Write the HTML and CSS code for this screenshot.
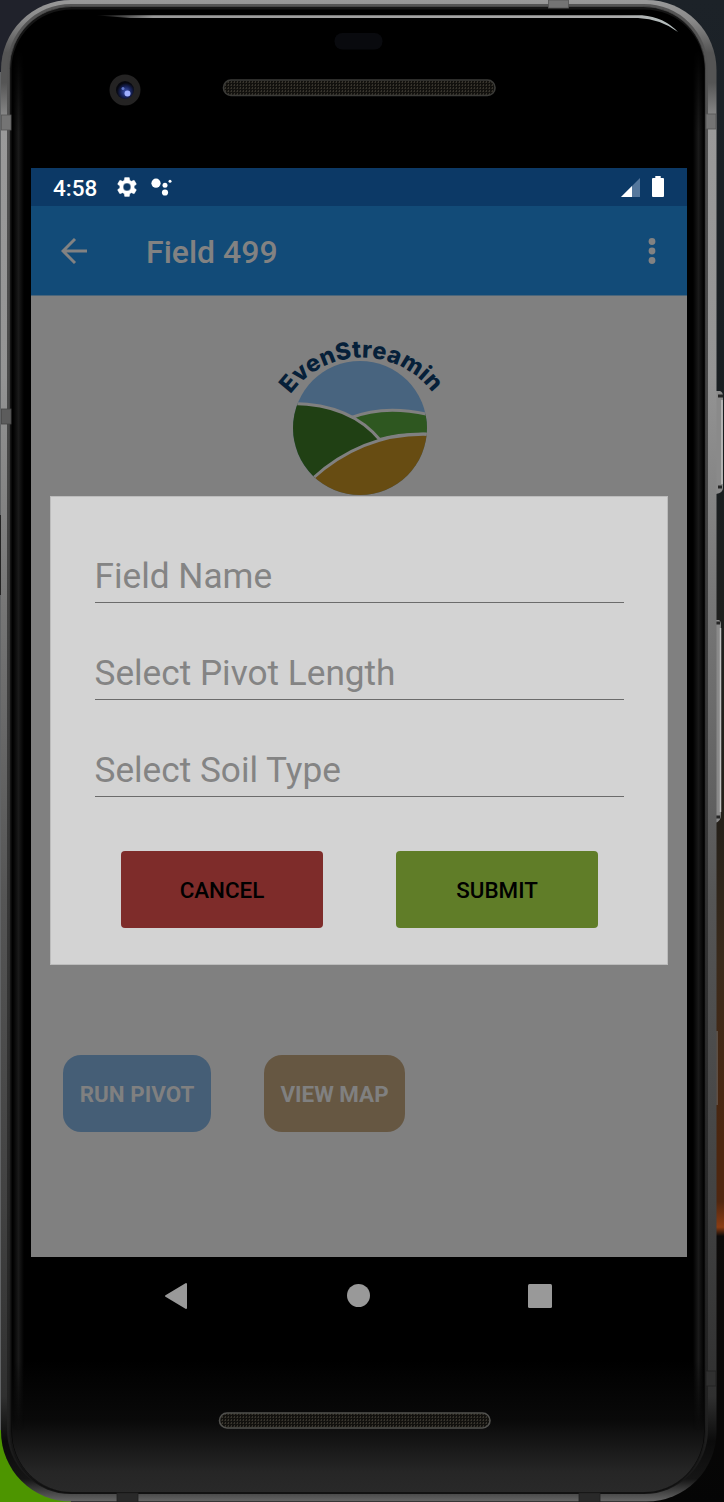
FILE: index.html
```html
<!DOCTYPE html>
<html lang="en">
<head>
<meta charset="utf-8">
<title>Field 499</title>
<link rel="stylesheet" href="styles.css">
</head>
<body>
<div class="stage">
  <svg class="device" viewBox="0 0 724 1502" width="724" height="1502" aria-hidden="true">
    <defs>
      <linearGradient id="desk" x1="0" y1="0" x2="0" y2="1">
        <stop offset="0" stop-color="#1c2228"/><stop offset=".3" stop-color="#181d20"/><stop offset=".55" stop-color="#252019"/>
        <stop offset=".64" stop-color="#3a2a1b"/><stop offset=".76" stop-color="#4c260f"/><stop offset=".8" stop-color="#50260f"/>
        <stop offset=".817" stop-color="#8a3c13"/><stop offset=".823" stop-color="#0c0a09"/><stop offset="1" stop-color="#050505"/>
      </linearGradient>
      <linearGradient id="metal" x1="0" y1="0" x2="0" y2="1">
        <stop offset="0" stop-color="#999"/><stop offset=".013" stop-color="#8a8a8a"/><stop offset=".035" stop-color="#555"/><stop offset=".055" stop-color="#555"/><stop offset=".085" stop-color="#9a9a9a"/>
        <stop offset=".25" stop-color="#949494"/><stop offset=".4" stop-color="#777"/><stop offset=".6" stop-color="#555"/>
        <stop offset=".8" stop-color="#424242"/><stop offset=".93" stop-color="#303030"/><stop offset=".96" stop-color="#0b0b0b"/><stop offset=".985" stop-color="#151515"/><stop offset="1" stop-color="#666"/>
      </linearGradient>
      <linearGradient id="rim" x1="0" y1="0" x2="0" y2="1">
        <stop offset="0" stop-color="#555"/><stop offset=".5" stop-color="#3c3c3c"/><stop offset=".94" stop-color="#222"/><stop offset="1" stop-color="#161616"/>
      </linearGradient>
      <linearGradient id="edge" x1="0" y1="0" x2="0" y2="1">
        <stop offset="0" stop-color="#555"/><stop offset=".6" stop-color="#3c3c3c"/><stop offset=".95" stop-color="#202020"/><stop offset="1" stop-color="#0a0a0a"/>
      </linearGradient>
      <linearGradient id="chin" x1="0" y1="0" x2="0" y2="1">
        <stop offset="0" stop-color="#000"/><stop offset=".45" stop-color="#090909"/><stop offset=".85" stop-color="#262626"/><stop offset="1" stop-color="#292929"/>
      </linearGradient>
      <linearGradient id="shine" x1="0" y1="0" x2="1" y2="0">
        <stop offset="0" stop-color="#999" stop-opacity="0"/><stop offset=".1" stop-color="#999"/><stop offset=".9" stop-color="#aaa"/><stop offset="1" stop-color="#b8c2c2"/>
      </linearGradient>
      <linearGradient id="band" x1="0" y1="0" x2="1" y2="0">
        <stop offset="0" stop-color="#1a1a1a" stop-opacity="0"/><stop offset=".5" stop-color="#1a1a1a"/><stop offset="1" stop-color="#1a1a1a" stop-opacity="0"/>
      </linearGradient>
      <linearGradient id="fade" x1="0" y1="0" x2="0" y2="1">
        <stop offset="0" stop-color="#000"/><stop offset=".06" stop-color="#fff"/><stop offset=".95" stop-color="#fff"/><stop offset="1" stop-color="#000"/>
      </linearGradient>
      <mask id="ends" maskUnits="userSpaceOnUse" x="0" y="50" width="724" height="1380"><rect y="50" width="724" height="1380" fill="url(#fade)"/></mask>
      <radialGradient id="lens" cx=".55" cy=".6" r=".5">
        <stop offset="0" stop-color="#4058b5"/><stop offset=".6" stop-color="#172259"/><stop offset="1" stop-color="#07080f"/>
      </radialGradient>
      <pattern id="mesh" width="3" height="3" patternUnits="userSpaceOnUse">
        <rect width="3" height="3" fill="#12110e"/><rect width="1" height="2" fill="#37342d"/><rect x="2" y="1" width="1" height="1" fill="#29261f"/>
      </pattern>
    </defs>
    <rect width="724" height="1502" fill="url(#desk)"/>
    <rect width="100" height="72" fill="#20222b"/>
    <rect y="72" width="4" height="1358" fill="#626466"/>
    <rect y="515" width="4" height="80" fill="#252525"/>
    <rect y="1430" width="71" height="72" fill="#4d9500"/>
    <g fill="#8a8a8a">
      <path d="M716 391h4q3 1 3 5v92q0 5-7 6z"/><path d="M715 620h4q2 1 2 5v189q0 8-6 9z"/>
    </g>
    <path d="M722 400v84M720.500 628v184" stroke="#c0c0c0" stroke-width="1.500"/>
    <path d="M718 396h5M718 487h4M716 623h4M716 817h4" stroke="#252525" stroke-width="3"/>
    <path d="M717 1031v74" stroke="#777"/>
    <rect x="1" y="0" width="715.500" height="1501.500" rx="70" ry="70" fill="url(#metal)"/>
    <rect x="7" y="4" width="701" height="1490" rx="64" fill="url(#rim)"/>
    <rect x="9.500" y="6.500" width="696" height="1486.500" rx="62" fill="#151515" stroke="url(#edge)" stroke-width=".6"/>
    <rect x="11.500" y="9.500" width="693" height="1482" rx="60" fill="#000"/>
    <path d="M12 1360H704V1432A60 60 0 0 1 644 1492H72A60 60 0 0 1 12 1432Z" fill="url(#chin)"/>
    <g mask="url(#ends)">
      <rect x="13" y="50" width="11" height="1380" fill="url(#band)"/>
      <rect x="693" y="50" width="11" height="1380" fill="url(#band)"/>
    </g>
    <path d="M95 15.200H642Q664 17 678 32Q661 19 638 18H130Z" fill="url(#shine)"/>
    <g fill="#747474" stroke="#555" stroke-width=".8">
      <rect x="1.500" y="115" width="9.500" height="15"/><rect x="706" y="114" width="10" height="15"/><rect x="1.500" y="409" width="9.500" height="15" fill="#5c5c5c" stroke="#444"/>
      <rect x="548.500" y="0" width="20" height="8"/><rect x="706" y="1371" width="10" height="15" fill="#303030" stroke="#222"/>
      <rect x="117" y="1493" width="21" height="9" fill="#292929" stroke="#222"/><rect x="579" y="1493" width="21" height="9" fill="#292929" stroke="#222"/>
    </g>
    <rect x="334.500" y="33" width="48" height="16.500" rx="8" fill="#090a0e"/>
    <circle cx="125" cy="90" r="15.500" fill="#242323"/><circle cx="125" cy="90" r="9" fill="url(#lens)"/>
    <circle cx="127.500" cy="93.500" r="3" fill="#9fafff"/><circle cx="123" cy="88.500" r="1.500" fill="#6378c8"/>
    <rect x="223.500" y="80" width="271.500" height="15.500" rx="7.500" fill="url(#mesh)" stroke="#3b3b38" stroke-width="1.600"/>
    <rect x="219.500" y="1413" width="270.500" height="15" rx="7.500" fill="url(#mesh)" stroke="#51514e" stroke-width="1.600"/>
  </svg>

  <div class="screen">
    <div class="status">
      <span class="clock">4:58</span>
      <svg class="gear" viewBox="2 2 20 20" width="20" height="20"><path fill="#fff" stroke="#fff" stroke-width=".4" d="M19.140 12.940c.04-.3.060-.610.060-.940 0-.320-.020-.640-.070-.940l2.030-1.580a.49.49 0 0 0 .120-.610l-1.920-3.320a.49.49 0 0 0-.590-.220l-2.390.960c-.5-.380-1.030-.7-1.620-.940l-.360-2.540a.48.48 0 0 0-.480-.410h-3.840c-.24 0-.43.170-.47.410l-.36 2.540c-.59.240-1.130.57-1.620.94l-2.390-.96a.49.49 0 0 0-.59.220L2.740 8.870c-.12.210-.08.470.12.610l2.030 1.580c-.05.3-.09.630-.09.940s.02.640.07.940l-2.030 1.580a.49.49 0 0 0-.12.610l1.920 3.320c.12.220.37.290.59.220l2.390-.96c.5.380 1.030.7 1.620.94l.36 2.540c.05.240.24.410.48.410h3.840c.24 0 .44-.17.47-.41l.36-2.540c.59-.24 1.130-.56 1.620-.94l2.390.96c.22.080.47 0 .59-.22l1.920-3.320a.49.49 0 0 0-.12-.61zM12 15.900A3.900 3.900 0 1 1 12 8.100a3.900 3.900 0 0 1 0 7.800z"/></svg>
      <svg class="assistant" width="22" height="18" viewBox="0 0 22 18" fill="#fff"><circle cx="5" cy="5.200" r="4.600"/><circle cx="14" cy="7.200" r="2.500"/><circle cx="19" cy="3.200" r="1.500"/><circle cx="14" cy="14.500" r="3.100"/></svg>
      <svg class="signal" width="19" height="19" viewBox="0 0 19 19"><path d="M19 0v19H0z" fill="#55779c"/><path d="M11 8v11H0z" fill="#fff"/></svg>
      <svg class="battery" width="12" height="21" viewBox="0 0 12 21"><path d="M3.300 0h5.400v2H11q1 0 1 1v17q0 1-1 1H1q-1 0-1-1V3q0-1 1-1h2.300z" fill="#fff"/></svg>
    </div>
    <div class="appbar">
      <svg width="26" height="26" viewBox="0 0 26 26" fill="none" stroke="#828282" stroke-width="2.900"><path d="M26 13H2.500M14 1 2 13l12 12"/></svg>
      <h1 class="title">Field 499</h1>
      <svg width="8" height="28" viewBox="0 0 8 28" fill="#828282"><circle cx="4" cy="4.500" r="3.400"/><circle cx="4" cy="14" r="3.400"/><circle cx="4" cy="23.500" r="3.400"/></svg>
    </div>
    <div class="content">
      <svg class="logo" viewBox="260 325 200 180" width="200" height="180">
        <defs><clipPath id="disc"><circle cx="360" cy="428" r="67"/></clipPath>
        <path id="arc" d="M290.500 394.500A88 88 0 0 1 434.500 395.500"/></defs>
        <g clip-path="url(#disc)">
          <rect x="290" y="360" width="140" height="136" fill="#48647f"/>
          <path d="M350 418Q385 404 430 415V434Q400 433 378 440Z" fill="#2e5720" stroke="#808080" stroke-width="3"/>
          <path d="M290 403.500Q350 403 381 441Q350 452 314 478L290 500Z" fill="#204014" stroke="#808080" stroke-width="3"/>
          <path d="M312 479Q364 432 430 434.500V500H312Z" fill="#674c12" stroke="#808080" stroke-width="3"/>
        </g>
        <text class="brand"><textPath href="#arc" textLength="165" lengthAdjust="spacing">EvenStreamin</textPath></text>
      </svg>
      <div class="dialog">
        <div class="field">Field Name</div>
        <div class="field">Select Pivot Length</div>
        <div class="field">Select Soil Type</div>
        <div class="actions"><div class="btn cancel">CANCEL</div><div class="btn submit">SUBMIT</div></div>
      </div>
      <div class="links"><div class="pill run">RUN PIVOT</div><div class="pill map">VIEW MAP</div></div>
    </div>
    <div class="nav">
      <svg width="24" height="28" viewBox="0 0 24 28"><path d="M22 2v24L2 14z" fill="#999" stroke="#999" stroke-width="2" stroke-linejoin="round"/></svg>
      <svg width="24" height="24" viewBox="0 0 24 24"><circle cx="12.500" cy="11.500" r="11.500" fill="#999"/></svg>
      <svg width="24" height="24" viewBox="0 0 24 24"><rect width="24" height="24" rx="1.500" fill="#999"/></svg>
    </div>
  </div>
</div>
</body>
</html>
```

FILE: styles.css
```css
* { box-sizing: border-box; }
body { margin: 0; background: #000; font-family: Roboto, sans-serif; }
.stage { position: relative; width: 724px; height: 1502px; padding: 168px 37px 0 31px; overflow: hidden; }
.device { position: absolute; left: 0; top: 0; }
.screen { position: relative; width: 656px; height: 1166px; }
svg { display: block; flex: none; }
.status { display: flex; align-items: center; height: 38px; padding: 0 23px 0 22px; background: #0c3966; color: #fff; }
.clock { width: 63px; font-size: 22.500px; font-weight: 500; line-height: 38px; padding-top: 2px; }
.gear { margin-left: .5px; }
.assistant { margin-left: 14.500px; }
.signal { margin-left: auto; }
.battery { margin-left: 12px; margin-bottom: 1px; }
.appbar { display: flex; align-items: center; height: 89px; padding: 0 31px 0 30px; background: #124b78; color: #828282; }
.title { margin: 3px auto 0 59px; font-size: 32px; font-weight: 500; line-height: 40px; }
.content { display: flex; flex-direction: column; height: 962px; padding: 29px 19px 0; background: #808080; border-top: 1px solid #4b667b; }
.logo { margin-left: 210px; margin-bottom: -9px; }
.dialog { position: relative; width: 618px; height: 469px; padding: 46px 43.500px 0; background: #d3d3d3; border: 1px solid #bcbcbc; }
.dialog, .links { flex: none; }
.field { width: 529px; height: 60px; margin-bottom: 37px; padding-top: 12px; border-bottom: 1.500px solid #6b6b6b; color: #848484; font-size: 35.200px; line-height: 42px; white-space: nowrap; }
.actions { display: flex; gap: 73px; padding: 17px 0 0 26.500px; }
.btn { width: 202px; height: 77px; border-radius: 4px; color: #000; font-size: 22.400px; font-weight: 500; line-height: 79px; text-align: center; }
.cancel { background: #7e2c2a; }
.submit { background: #607d28; }
.links { display: flex; gap: 53px; padding: 90px 0 0 13px; }
.pill { height: 77px; border-radius: 18px; color: #808080; font-size: 22.400px; font-weight: 700; line-height: 79px; text-align: center; white-space: nowrap; }
.run { width: 148px; background: #455e76; }
.map { width: 141px; background: #665742; }
.brand { font: 800 23.500px Inter, sans-serif; fill: #062039; }
.nav { display: flex; align-items: center; justify-content: space-between; height: 77px; padding: 0 135px 0 133px; }
```
